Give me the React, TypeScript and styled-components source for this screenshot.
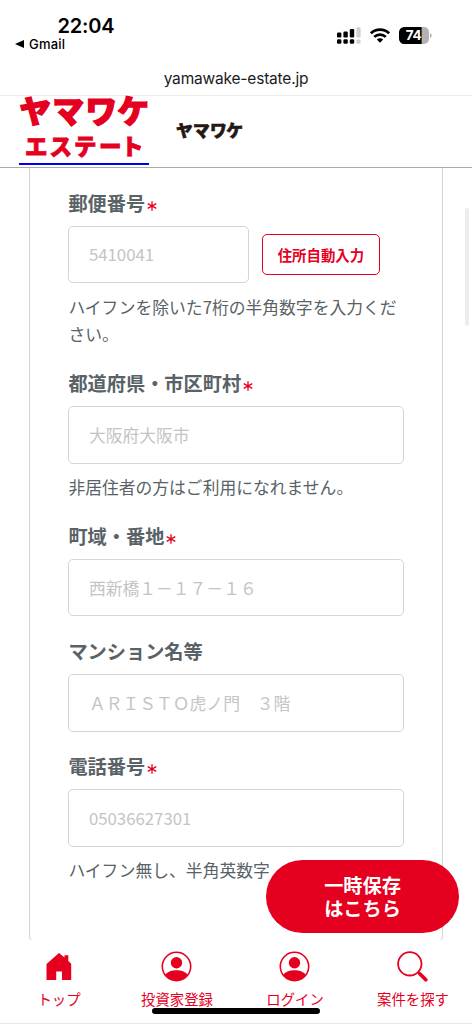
import React from "react";
import styled, { createGlobalStyle } from "styled-components";

const RED = "#e6001f";
const JP = '"Noto Sans CJK JP", sans-serif';

const GlobalStyle = createGlobalStyle`
  * { box-sizing: border-box; }
  body { margin: 0; background: #fff; font-family: ${JP}; color: #596266; }
`;

const Screen = styled.div`
  position: relative;
  display: flex;
  flex-direction: column;
  width: 472px;
  height: 1024px;
  overflow: hidden;
  background: #fff;
`;

const StatusBar = styled.div`
  display: flex;
  justify-content: space-between;
  height: 64px;
  padding: 15px 40px 0 15px;
  color: #000;
  font-family: Inter, sans-serif;
`;

const Clock = styled.div`
  padding-left: 42.5px;
  font-size: 20px;
  line-height: 23px;
  font-weight: 600;
  letter-spacing: -0.2px;
`;

const BackLink = styled.div`
  display: flex;
  align-items: center;
  gap: 5px;
  margin-top: -2px;
  font-size: 13px;
  line-height: 16px;
  font-weight: 500;
  letter-spacing: 0.2px;
`;

const Indicators = styled.div`
  display: flex;
  align-items: flex-start;
  padding-top: 11.5px;
`;

const AddressBar = styled.div`
  height: 32px;
  padding-top: 5px;
  border-bottom: 1px solid #ececec;
  text-align: center;
  color: #1b1b1b;
  font: 400 15.5px/20px Inter, sans-serif;
  letter-spacing: -0.19px;
`;

const Header = styled.header`
  flex: none;
  display: flex;
  height: 72px;
  padding-left: 19px;
  border-bottom: 1px solid #aaa;
`;

const EstateLogo = styled.a`
  width: 130px;
  height: 69px;
  border-bottom: 2px solid #0000f5;
  svg { display: block; overflow: visible; }
`;

const BrandLogo = styled.a`
  margin: 24px 0 0 26px;
  svg { display: block; overflow: visible; }
`;

const LogoText = styled.text`
  font-family: ${JP};
  font-weight: 900;
  stroke-linejoin: miter;
`;

const Content = styled.main`
  flex: none;
  position: relative;
  height: 772px;
  padding: 0 29px;
  overflow: hidden;
`;

const Card = styled.form`
  height: 775px;
  padding: 20.6px 38px 0 38.4px;
  border: 1px solid #d5d5d5;
  border-top: 0;
  border-radius: 0 0 7px 7px;
`;

const Field = styled.div`
  margin-bottom: 20.3px;
`;

const Label = styled.label`
  display: block;
  height: 28px;
  margin-bottom: 9px;
  font-size: 19.2px;
  line-height: 28px;
  font-weight: 700;
  white-space: nowrap;
`;

const Mark = styled.svg`
  margin: 0 0 0 1.5px;
`;

const InputRow = styled.div`
  display: flex;
  align-items: center;
  gap: 13px;
`;

const Input = styled.input<{ $short?: boolean }>`
  display: block;
  width: ${(p) => (p.$short ? "180.5px" : "335.5px")};
  height: 57.8px;
  padding: 0 20px 0 19.5px;
  border: 1px solid #d5d5d5;
  border-radius: 5px;
  background: #fff;
  font: 400 16.8px ${JP};
  &::placeholder { color: #c4c4c4; opacity: 1; }
`;

const FillButton = styled.button`
  width: 118px;
  height: 41px;
  margin-top: 1px;
  padding: 0;
  border: 1px solid ${RED};
  border-radius: 5px;
  background: #fff;
  color: ${RED};
  font: 700 14.4px ${JP};
`;

const Help = styled.p`
  margin: 10.2px 0 0;
  font-size: 16.8px;
  line-height: 27.5px;
`;

const ScrollThumb = styled.div`
  position: absolute;
  top: 40px;
  right: 3px;
  width: 4px;
  height: 118px;
  border-radius: 2px;
  background: #ededed;
`;

const SaveButton = styled.button`
  position: absolute;
  left: 266px;
  top: 860px;
  width: 193px;
  height: 73px;
  padding: 1px 0 0;
  border: 0;
  border-radius: 37px;
  background: ${RED};
  color: #fff;
  font: 700 19.2px/23px ${JP};
`;

const SaveLine = styled.span`
  display: block;
`;

const TabBar = styled.nav`
  flex: none;
  display: grid;
  grid-template-columns: repeat(4, 118px);
  height: 84px;
  border-bottom: 1px solid #e8e8e8;
  background: #fff;
`;

const Tab = styled.a`
  display: flex;
  flex-direction: column;
  align-items: center;
  padding-top: 11px;
  color: ${RED};
  font-size: 14.4px;
  line-height: 20px;
  svg { display: block; margin-bottom: 7px; }
`;

const HomeIndicator = styled.div`
  position: absolute;
  left: 152px;
  top: 1008px;
  width: 168px;
  height: 6px;
  border-radius: 3px;
  background: #000;
`;

const Required = () => (
  <Mark width="10" height="10" viewBox="0 0 10 10" stroke={RED} strokeWidth="1.3">
    <path d="M5 .3v9.4M.7 2.600l8.600 4.800M9.300 2.600L.7 7.400" />
  </Mark>
);

const SignalIcon = () => (
  <svg width="24" height="17" viewBox="0 0 24 17">
    <g fill="#000">
      <rect x="0" y="5.5" width="4.4" height="5" rx="1.2" />
      <rect x="6.4" y="4.5" width="4.4" height="6" rx="1.2" />
      <rect x="12.800" y="2" width="4.4" height="8.500" rx="1.2" />
      <rect x="0" y="12.200" width="4.4" height="4.600" rx="1.4" />
      <rect x="6.4" y="12.200" width="4.4" height="4.600" rx="1.4" />
      <rect x="12.800" y="12.200" width="4.4" height="4.600" rx="1.4" />
    </g>
    <g fill="#cfcfcf">
      <rect x="19.400" y=".3" width="4.2" height="10.200" rx="1.2" />
      <rect x="19.400" y="12.400" width="4.2" height="4.400" rx="1.4" />
    </g>
  </svg>
);

const WifiIcon = () => (
  <svg width="20" height="15" viewBox="0 0 20 15" style={{ margin: "1px 0 0 9px" }}>
    <g fill="none" stroke="#000" strokeWidth="2.7">
      <path d="M.9 5.300a13 13 0 0 1 18.200 0" />
      <path d="M4.200 8.900a8.300 8.300 0 0 1 11.600 0" />
    </g>
    <path d="M6.800 11.600a4.600 4.600 0 0 1 6.400 0L10 14.800z" />
  </svg>
);

const BatteryIcon = () => (
  <svg width="33" height="17" viewBox="0 0 33 17" style={{ marginLeft: 9 }}>
    <path d="M22.500 0H25a5 5 0 0 1 5 5v7a5 5 0 0 1-5 5h-2.500z" fill="#b3b3b3" />
    <path d="M22.700 0H5.200A5.200 5.200 0 0 0 0 5.200v6.600A5.200 5.200 0 0 0 5.200 17h17.500z" />
    <path d="M31 6.200c2.300.6 2.300 4 0 4.600z" fill="#b3b3b3" />
    <text x="14.500" y="13.300" textAnchor="middle" fontFamily="Inter, sans-serif" fontSize="13.500" fontWeight="700" letterSpacing="-.3" fill="#fff">74</text>
  </svg>
);

const HomeIcon = () => (
  <svg width="30" height="31" viewBox="0 0 30 31" fill={RED}>
    <path d="M2.500 29V13L15 2l5.500 4.600V4.300h3.800v5.700l2.900 2.700V29H18v-8.500h-5.800V29z" />
  </svg>
);

const UserIcon = () => (
  <svg width="32" height="31" viewBox="0 0 32 31">
    <circle cx="15.500" cy="15.500" r="14.200" fill="none" stroke={RED} strokeWidth="1.600" />
    <circle cx="15.500" cy="11.800" r="5.700" fill={RED} />
    <path d="M4 24c2.800-3.700 6.900-4.800 11.500-4.800S24.200 20.300 27 24a14.200 14.200 0 0 1-23 0z" fill={RED} />
  </svg>
);

const SearchIcon = () => (
  <svg width="32" height="31" viewBox="0 0 32 31" fill="none" stroke={RED}>
    <circle cx="12.800" cy="12.800" r="11.700" strokeWidth="1.800" />
    <path d="M21 21l2 2" strokeWidth="2.200" />
    <path d="M22.800 22.800l6 6" strokeWidth="3.600" strokeLinecap="round" />
  </svg>
);

export default function App() {
  return (
    <>
      <GlobalStyle />
      <Screen>
        <StatusBar>
          <div>
            <Clock>22:04</Clock>
            <BackLink>
              <svg width="9" height="8" viewBox="0 0 9 8"><path d="M0 4L9 0v8z" /></svg>
              Gmail
            </BackLink>
          </div>
          <Indicators>
            <SignalIcon />
            <WifiIcon />
            <BatteryIcon />
          </Indicators>
        </StatusBar>
        <AddressBar>yamawake-estate.jp</AddressBar>
        <Header>
          <EstateLogo>
            <svg width="130" height="67" viewBox="0 0 130 67" fill={RED} stroke={RED}>
              <LogoText x="0.500 33.500 66.500 98.500" y="26.500" fontSize="31.500" strokeWidth="1.400">ヤマワケ</LogoText>
              <LogoText x="6 30.500 55 80 102" y="58.700" fontSize="22.500" strokeWidth=".8">エステート</LogoText>
            </svg>
          </EstateLogo>
          <BrandLogo>
            <svg width="70" height="24" viewBox="0 0 70 24" fill="#231815" stroke="#231815" strokeWidth=".6">
              <LogoText x="1 18 35 51.300" y="17.300" fontSize="16.800">ヤマワケ</LogoText>
            </svg>
          </BrandLogo>
        </Header>
        <Content>
          <Card>
            <Field>
              <Label>郵便番号<Required /></Label>
              <InputRow>
                <Input $short placeholder="5410041" />
                <FillButton type="button">住所自動入力</FillButton>
              </InputRow>
              <Help>ハイフンを除いた7桁の半角数字を入力ください。</Help>
            </Field>
            <Field>
              <Label>都道府県・市区町村<Required /></Label>
              <Input placeholder="大阪府大阪市" />
              <Help>非居住者の方はご利用になれません。</Help>
            </Field>
            <Field>
              <Label>町域・番地<Required /></Label>
              <Input placeholder="西新橋１－１７－１６" />
            </Field>
            <Field>
              <Label>マンション名等</Label>
              <Input placeholder="ＡＲＩＳＴＯ虎ノ門　３階" />
            </Field>
            <Field>
              <Label>電話番号<Required /></Label>
              <Input placeholder="05036627301" />
              <Help>ハイフン無し、半角英数字</Help>
            </Field>
          </Card>
          <ScrollThumb />
        </Content>
        <TabBar>
          <Tab><HomeIcon />トップ</Tab>
          <Tab><UserIcon />投資家登録</Tab>
          <Tab><UserIcon />ログイン</Tab>
          <Tab><SearchIcon />案件を探す</Tab>
        </TabBar>
        <SaveButton type="button">
          <SaveLine>一時保存</SaveLine>
          <SaveLine>はこちら</SaveLine>
        </SaveButton>
        <HomeIndicator />
      </Screen>
    </>
  );
}
